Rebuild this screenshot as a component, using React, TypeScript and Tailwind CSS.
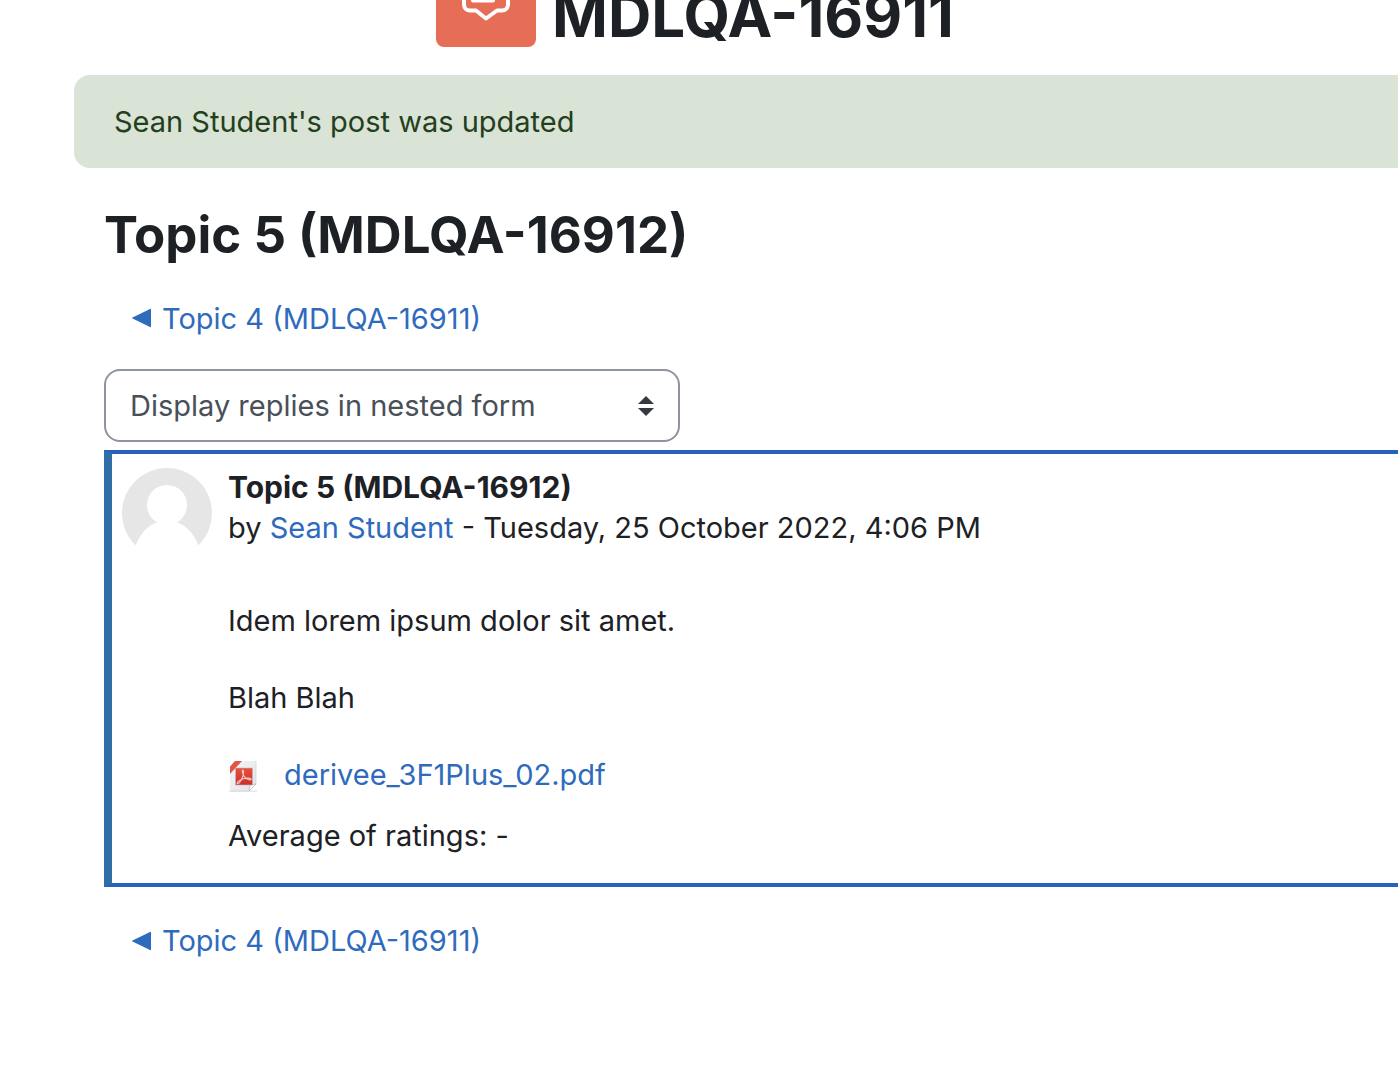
import React from "react";

const textLink = "text-[#2f6bbd] hover:underline";

function ForumIcon() {
  return (
    <svg
      viewBox="0 0 48 48"
      className="size-12"
      fill="none"
      stroke="white"
      strokeWidth="4"
      strokeLinejoin="round"
      strokeLinecap="round"
      aria-hidden="true"
    >
      <path d="M8 3h32a6 6 0 0 1 6 6v22.500a6 6 0 0 1-6 6h-5L24 45.500l-10-8H8a6 6 0 0 1-6-6V9a6 6 0 0 1 6-6z" />
      <path d="M11 16h26M11 27.500h20" />
    </svg>
  );
}

function Avatar() {
  return (
    <svg viewBox="0 0 90 90" className="size-[90px] shrink-0" role="img" aria-label="Sean Student">
      <circle cx="45" cy="45" r="45" fill="#e6e6e6" />
      <circle cx="45" cy="37" r="20" fill="white" />
      <path
        d="M13.500 77.500C18 66 26 57 36 54h18c10 3 18 12 22.500 23.500L80 90H10z"
        fill="white"
      />
    </svg>
  );
}

function PdfIcon() {
  return (
    <svg viewBox="0 -3 32 35" className="h-[35px] w-8 shrink-0" aria-hidden="true">
      <defs>
        <linearGradient id="pdf-page" x1="0" y1="0" x2="1" y2="1">
          <stop offset="0" stopColor="#f6f6f8" />
          <stop offset="1" stopColor="#e2e3e7" />
        </linearGradient>
        <linearGradient id="pdf-red" x1="0" y1="0" x2="0" y2="1">
          <stop offset="0" stopColor="#e8503f" />
          <stop offset="1" stopColor="#cc2f27" />
        </linearGradient>
      </defs>
      <path d="M1 30.500h28v1.200H1z" fill="#c9c9cc" opacity=".6" />
      <path d="M8 1h19.500q.5 0 .5.500V24l-7 7H2.500q-.5 0-.5-.5V7z" fill="url(#pdf-page)" />
      <path d="M27.500 1q.5 0 .5.500V24l-7 7H2.500" fill="none" stroke="#d3d4d9" strokeWidth=".8" />
      <path d="M21 31l1-6 6-1z" fill="#fff" stroke="#b5b6bb" strokeWidth=".7" />
      <path d="M7 1h7L2 14V6.500z" fill="#e25545" />
      <path d="M7.500 8h17v17h-17z" fill="url(#pdf-red)" stroke="#b8bcc2" strokeWidth=".6" />
      <path
        d="M14.500 10c1.500-.5 1.500 4-.2 7.500-1.500 3.500-3.800 6.500-5 6-1-.8 2.500-3.800 6-4.700 3.500-1 7.700-1 8 .4.100 1.300-4 .6-6.400-2-2.200-2.300-3.200-6.900-2.400-7.200z"
        fill="none"
        stroke="#f6c9c3"
        strokeWidth="1.100"
      />
    </svg>
  );
}

function PreviousTopic() {
  return (
    <a href="#" className={`inline-flex items-center gap-[11px] ${textLink}`}>
      <svg viewBox="0 0 19 20" className="h-5 w-[19px]" aria-hidden="true">
        <path d="M.500 9.500 18 1q1-.5 1 .5v17q0 1-1 .5L.500 10.500q-.8-.5 0-1z" fill="currentColor" />
      </svg>
      Topic 4 (MDLQA-16911)
    </a>
  );
}

function Post() {
  return (
    <article className="flex items-start gap-4 border-y-4 border-l-8 border-y-[#2862c0] border-l-[#2f6fa5] pt-[14px] pb-[25px] pl-[10px]">
      <Avatar />
      <div className="min-w-0 flex-1 pt-px">
        <header>
          <h3 className="text-[30px] leading-9 font-bold">Topic 5 (MDLQA-16912)</h3>
          <p>
            by{" "}
            <a href="#" className={textLink}>
              Sean Student
            </a>{" "}
            - Tuesday, 25 October 2022, 4:06 PM
          </p>
        </header>
        <div className="mt-12 space-y-8">
          <p>Idem lorem ipsum dolor sit amet.</p>
          <p>Blah Blah</p>
          <a href="#" className={`flex items-center gap-6 ${textLink}`}>
            <PdfIcon />
            derivee_3F1Plus_02.pdf
          </a>
        </div>
        <p className="mt-4">Average of ratings: -</p>
      </div>
    </article>
  );
}

export default function App() {
  return (
    <div className="min-h-screen overflow-hidden bg-white pl-[74px] font-['Inter','Liberation_Sans',sans-serif] text-[29px] leading-[45px] text-[#1d2125]">
      <header className="-mt-[53px] flex items-center gap-4 pl-[362px]">
        <div className="flex size-[100px] shrink-0 items-center justify-center rounded-lg bg-[#e66e57]">
          <ForumIcon />
        </div>
        <h1 className="pt-9 text-[60px] leading-[64px] font-bold whitespace-nowrap">MDLQA-16911</h1>
      </header>

      <div role="alert" className="mt-7 rounded-l-2xl bg-[#d9e3d6] px-10 py-6 text-[#23401c]">
        Sean Student's post was updated
      </div>

      <main className="pl-[30px]">
        <h2 className="mt-8 text-[51px] leading-[70px] font-bold">Topic 5 (MDLQA-16912)</h2>
        <nav className="mt-[25px] pl-7">
          <PreviousTopic />
        </nav>

        <div className="relative mt-7 w-[576px] max-w-full">
          <select
            aria-label="Display mode"
            className="block h-[73px] w-full appearance-none rounded-2xl border-2 border-[#8f959e] bg-white pr-14 pl-6 text-[#495057]"
          >
            <option>Display replies in nested form</option>
          </select>
          <svg
            viewBox="0 0 16 20"
            className="pointer-events-none absolute top-[27px] right-[26px] h-5 w-4"
            fill="#343a40"
            aria-hidden="true"
          >
            <path d="M8 0l8 8H0zM8 20l8-8H0z" />
          </svg>
        </div>

        <div className="mt-2">
          <Post />
        </div>

        <nav className="mt-[31px] pl-7">
          <PreviousTopic />
        </nav>
      </main>
    </div>
  );
}
